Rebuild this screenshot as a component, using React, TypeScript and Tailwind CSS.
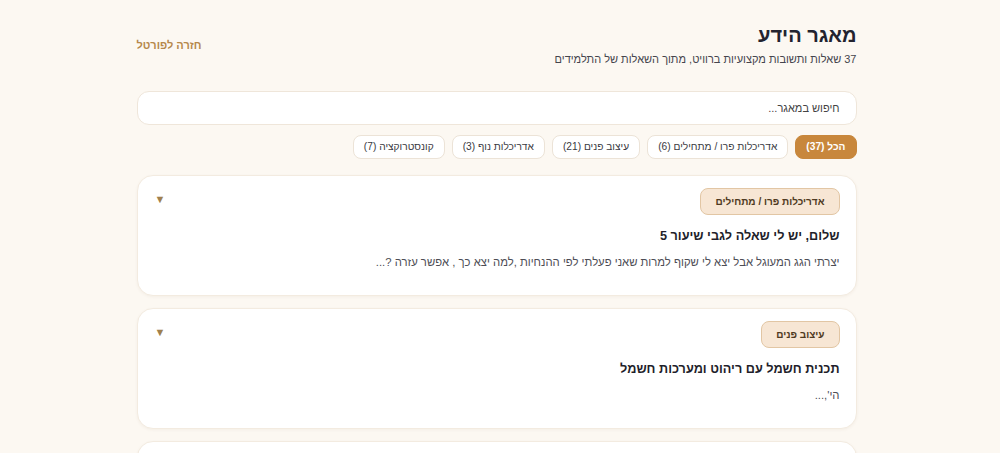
import React, { useState } from 'react';

type Question = {
    id: number;
    category: string;
    title: string;
    preview: string;
};

const categories = [
    { id: 'all', label: 'הכל', count: 37 },
    { id: 'pro', label: 'אדריכלות פרו / מתחילים', count: 6 },
    { id: 'interior', label: 'עיצוב פנים', count: 21 },
    { id: 'landscape', label: 'אדריכלות נוף', count: 3 },
    { id: 'construction', label: 'קונסטרוקציה', count: 7 },
];

const questions: Question[] = [
    {
        id: 1,
        category: 'אדריכלות פרו / מתחילים',
        title: 'שלום, יש לי שאלה לגבי שיעור 5',
        preview: 'יצרתי הגג המעוגל אבל יצא לי שקוף למרות שאני פעלתי לפי ההנחיות ,למה יצא כך , אפשר עזרה ?...',
    },
    {
        id: 2,
        category: 'עיצוב פנים',
        title: 'תכנית חשמל עם ריהוט ומערכות חשמל',
        preview: "הי',...",
    },
    {
        id: 3,
        category: 'אדריכלות פרו / מתחילים',
        title: 'שאלה לגבי קירות ותקרות',
        preview: 'איך אני מגדיר עובי קיר שונה בכל קומה?...',
    },
];

const QuestionCard: React.FC<{ q: Question }> = ({ q }) => {
    const [open, setOpen] = useState(false);
    return (
        <div className="bg-white border border-[#f3ebe0] rounded-2xl shadow-[0_1px_3px_rgba(120,90,50,0.06)] px-4 pt-[12px] pb-[23px]">
            <div className="flex items-start justify-between">
                <span className="inline-flex items-center h-[27px] px-[14px] rounded-lg bg-[#f7e6d4] border border-[#e2c6a4] text-[10px] font-bold text-[#4f3a22]">
                    {q.category}
                </span>
                <button
                    onClick={() => setOpen(!open)}
                    className="mt-[6px] ml-[1px] text-[11px] leading-none text-[#a0804e]"
                >
                    ▼
                </button>
            </div>
            <h3 className="mt-[10px] text-[12.7px] leading-[22px] font-bold text-[#1f1f2b]">{q.title}</h3>
            <p className="mt-[5px] text-[11.3px] leading-[20px] text-[#4d4d55]">{q.preview}</p>
        </div>
    );
};

export default function App() {
    const [active, setActive] = useState('all');
    const [query, setQuery] = useState('');

    return (
        <div dir="rtl" className="min-h-screen bg-[#fcf8f2] font-['Liberation_Sans',Arial,sans-serif] pr-[7px]">
            <div className="max-w-[720px] mx-auto pt-[21px] pb-10">
                {/* Header */}
                <div className="flex items-center justify-between">
                    <div>
                        <h1 className="text-[20px] leading-[28px] font-bold text-[#23232f]">מאגר הידע</h1>
                        <p className="mt-[1px] text-[11px] leading-[18px] text-[#45454d]">
                            37 שאלות ותשובות מקצועיות ברוויט, מתוך השאלות של התלמידים
                        </p>
                    </div>
                    <a href="#" className="text-[11px] font-bold text-[#b6884b] mt-[2px]">חזרה לפורטל</a>
                </div>

                {/* Search */}
                <input
                    value={query}
                    onChange={e => setQuery(e.target.value)}
                    placeholder="חיפוש במאגר..."
                    className="mt-[23px] w-full h-[34px] px-4 rounded-xl bg-white border border-[#efe6da] text-[11px] text-[#333] placeholder:text-[#444] outline-none"
                />

                {/* Filters */}
                <div className="mt-[10px] flex flex-wrap gap-[7px]">
                    {categories.map(c => (
                        <button
                            key={c.id}
                            onClick={() => setActive(c.id)}
                            className={`h-[24px] px-[10px] rounded-lg text-[10.2px] border ${
                                active === c.id
                                    ? 'bg-[#c8873c] border-[#c8873c] text-white font-bold'
                                    : 'bg-white border-[#ece3d7] text-[#3a3a42]'
                            }`}
                        >
                            {c.label} ({c.count})
                        </button>
                    ))}
                </div>

                {/* Questions */}
                <div className="mt-[16px] flex flex-col gap-3">
                    {questions.map(q => (
                        <QuestionCard key={q.id} q={q} />
                    ))}
                </div>
            </div>
        </div>
    );
}
